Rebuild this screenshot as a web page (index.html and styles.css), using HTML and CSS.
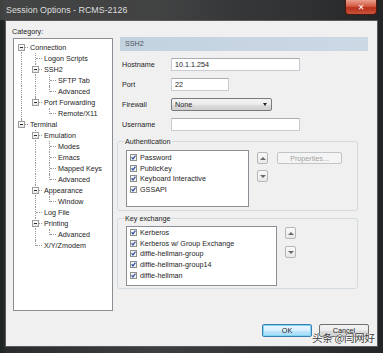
FILE: index.html
```html
<!DOCTYPE html>
<html>
<head>
<meta charset="utf-8">
<link rel="stylesheet" href="styles.css">
</head>
<body>
<div class="window">
  <div class="titlebar">
    <div class="title">Session Options - RCMS-2126</div>
    <div class="close">&#x2715;</div>
  </div>
  <div class="client">
    <div class="main">
      <div class="left">
        <div class="cat-label">Category:</div>
        <div class="tree">
          <div class="row"><span class="c f"><span class="exp"></span></span><span class="lbl">Connection</span></div>
          <div class="row"><span class="c v"></span><span class="c t"></span><span class="lbl">Logon Scripts</span></div>
          <div class="row"><span class="c v"></span><span class="c t"><span class="exp"></span></span><span class="lbl">SSH2</span></div>
          <div class="row"><span class="c v"></span><span class="c v"></span><span class="c t"></span><span class="lbl">SFTP Tab</span></div>
          <div class="row"><span class="c v"></span><span class="c v"></span><span class="c l"></span><span class="lbl">Advanced</span></div>
          <div class="row"><span class="c v"></span><span class="c l"><span class="exp"></span></span><span class="lbl">Port Forwarding</span></div>
          <div class="row"><span class="c v"></span><span class="c"></span><span class="c l"></span><span class="lbl">Remote/X11</span></div>
          <div class="row"><span class="c l"><span class="exp"></span></span><span class="lbl">Terminal</span></div>
          <div class="row"><span class="c"></span><span class="c t"><span class="exp"></span></span><span class="lbl">Emulation</span></div>
          <div class="row"><span class="c"></span><span class="c v"></span><span class="c t"></span><span class="lbl">Modes</span></div>
          <div class="row"><span class="c"></span><span class="c v"></span><span class="c t"></span><span class="lbl">Emacs</span></div>
          <div class="row"><span class="c"></span><span class="c v"></span><span class="c t"></span><span class="lbl">Mapped Keys</span></div>
          <div class="row"><span class="c"></span><span class="c v"></span><span class="c l"></span><span class="lbl">Advanced</span></div>
          <div class="row"><span class="c"></span><span class="c t"><span class="exp"></span></span><span class="lbl">Appearance</span></div>
          <div class="row"><span class="c"></span><span class="c v"></span><span class="c l"></span><span class="lbl">Window</span></div>
          <div class="row"><span class="c"></span><span class="c t"></span><span class="lbl">Log File</span></div>
          <div class="row"><span class="c"></span><span class="c t"><span class="exp"></span></span><span class="lbl">Printing</span></div>
          <div class="row"><span class="c"></span><span class="c v"></span><span class="c l"></span><span class="lbl">Advanced</span></div>
          <div class="row"><span class="c"></span><span class="c l"></span><span class="lbl">X/Y/Zmodem</span></div>
        </div>
      </div>
      <div class="right">
        <div class="header">SSH2</div>
        <div class="form">
          <label>Hostname</label><div class="input wide">10.1.1.254</div>
          <label>Port</label><div class="input port">22</div>
          <label>Firewall</label><div class="select"><span>None</span><span class="arrow"></span></div>
          <label>Username</label><div class="input wide"></div>
        </div>
        <fieldset class="group auth">
          <legend>Authentication</legend>
          <div class="group-body">
            <div class="list auth-list">
              <div class="item"><svg class="cb" width="7" height="7" viewBox="0 0 7 7"><rect x=".5" y=".5" width="6" height="6" fill="#f6f6f6" stroke="#8e8f8f"/><path d="M1.6 3.3 L3 4.9 L5.4 1.7" stroke="#3a55a0" stroke-width="1.3" fill="none"/></svg><span>Password</span></div>
              <div class="item"><svg class="cb" width="7" height="7" viewBox="0 0 7 7"><rect x=".5" y=".5" width="6" height="6" fill="#f6f6f6" stroke="#8e8f8f"/><path d="M1.6 3.3 L3 4.9 L5.4 1.7" stroke="#3a55a0" stroke-width="1.3" fill="none"/></svg><span>PublicKey</span></div>
              <div class="item"><svg class="cb" width="7" height="7" viewBox="0 0 7 7"><rect x=".5" y=".5" width="6" height="6" fill="#f6f6f6" stroke="#8e8f8f"/><path d="M1.6 3.3 L3 4.9 L5.4 1.7" stroke="#3a55a0" stroke-width="1.3" fill="none"/></svg><span>Keyboard Interactive</span></div>
              <div class="item"><svg class="cb" width="7" height="7" viewBox="0 0 7 7"><rect x=".5" y=".5" width="6" height="6" fill="#f6f6f6" stroke="#8e8f8f"/><path d="M1.6 3.3 L3 4.9 L5.4 1.7" stroke="#3a55a0" stroke-width="1.3" fill="none"/></svg><span>GSSAPI</span></div>
            </div>
            <div class="updown auth-ud">
              <div class="sbtn"><span class="tri up"></span></div>
              <div class="sbtn"><span class="tri down"></span></div>
            </div>
            <div class="btn props">Properties...</div>
          </div>
        </fieldset>
        <fieldset class="group kex">
          <legend>Key exchange</legend>
          <div class="group-body">
            <div class="list kex-list">
              <div class="item"><svg class="cb" width="7" height="7" viewBox="0 0 7 7"><rect x=".5" y=".5" width="6" height="6" fill="#f6f6f6" stroke="#8e8f8f"/><path d="M1.6 3.3 L3 4.9 L5.4 1.7" stroke="#3a55a0" stroke-width="1.3" fill="none"/></svg><span>Kerberos</span></div>
              <div class="item"><svg class="cb" width="7" height="7" viewBox="0 0 7 7"><rect x=".5" y=".5" width="6" height="6" fill="#f6f6f6" stroke="#8e8f8f"/><path d="M1.6 3.3 L3 4.9 L5.4 1.7" stroke="#3a55a0" stroke-width="1.3" fill="none"/></svg><span>Kerberos w/ Group Exchange</span></div>
              <div class="item"><svg class="cb" width="7" height="7" viewBox="0 0 7 7"><rect x=".5" y=".5" width="6" height="6" fill="#f6f6f6" stroke="#8e8f8f"/><path d="M1.6 3.3 L3 4.9 L5.4 1.7" stroke="#3a55a0" stroke-width="1.3" fill="none"/></svg><span>diffie-hellman-group</span></div>
              <div class="item"><svg class="cb" width="7" height="7" viewBox="0 0 7 7"><rect x=".5" y=".5" width="6" height="6" fill="#f6f6f6" stroke="#8e8f8f"/><path d="M1.6 3.3 L3 4.9 L5.4 1.7" stroke="#3a55a0" stroke-width="1.3" fill="none"/></svg><span>diffie-hellman-group14</span></div>
              <div class="item"><svg class="cb" width="7" height="7" viewBox="0 0 7 7"><rect x=".5" y=".5" width="6" height="6" fill="#f6f6f6" stroke="#8e8f8f"/><path d="M1.6 3.3 L3 4.9 L5.4 1.7" stroke="#3a55a0" stroke-width="1.3" fill="none"/></svg><span>diffie-hellman</span></div>
            </div>
            <div class="updown kex-ud">
              <div class="sbtn"><span class="tri up"></span></div>
              <div class="sbtn"><span class="tri down"></span></div>
            </div>
          </div>
        </fieldset>
      </div>
    </div>
    <div class="footer">
      <div class="btn dlg default">OK</div>
      <div class="btn dlg">Cancel</div>
    </div>
  </div>
  <div class="watermark">头条 @闫网好</div>
</div>
</body>
</html>
```

FILE: styles.css
```css
html, body {
  margin: 0;
  padding: 0;
}
body {
  width: 383px;
  height: 353px;
  overflow: hidden;
  background: #1a1c1d;
  font-family: "Liberation Sans", Arial, sans-serif;
  font-size: 7.2px;
  color: #1d1d1d;
}
.window {
  position: relative;
  width: 383px;
  height: 353px;
  display: flex;
  flex-direction: column;
  background: linear-gradient(90deg, #1c2420 0px, #2a2c2d 6px, #3d3e3f 40%, #303132 80%, #232425 100%);
}
.titlebar {
  height: 20px;
  display: flex;
  justify-content: space-between;
  align-items: flex-start;
  background: linear-gradient(90deg, rgba(90,90,90,0.55) 0%, rgba(80,80,80,0.35) 35%, rgba(0,0,0,0) 60%);
}
.title {
  margin: 5px 0 0 6px;
  font-size: 8.9px;
  line-height: 11px;
  color: #dedede;
  white-space: nowrap;
}
.close {
  width: 32px;
  height: 15px;
  margin-right: 6px;
  box-sizing: border-box;
  border: 1px solid #4a1a12;
  border-top: none;
  border-radius: 0 0 4px 4px;
  background: linear-gradient(180deg, #e9a08e 0%, #d25a42 45%, #b8301b 55%, #c8543a 100%);
  color: #fff;
  font-family: "DejaVu Sans", sans-serif;
  font-size: 8px;
  font-weight: bold;
  display: flex;
  align-items: center;
  justify-content: center;
}
.client {
  flex: 1;
  margin: 0 5px 6px 5px;
  background: #f0f0f0;
  border: 1px solid #5a5a5a;
  display: flex;
  flex-direction: column;
}
.main {
  display: flex;
  padding: 6px 0 0 6px;
}
.left {
  width: 101px;
  display: flex;
  flex-direction: column;
}
.cat-label {
  height: 10px;
  line-height: 10px;
}
.tree {
  margin: 1px 0 0 1px;
  width: 100px;
  height: 273px;
  box-sizing: border-box;
  background: #fff;
  border: 1px solid #8a8f96;
  padding-top: 2.5px;
}
.row {
  display: flex;
  height: 11px;
  align-items: center;
}
.c {
  position: relative;
  flex: none;
  width: 14px;
  height: 11px;
  display: flex;
  align-items: center;
  justify-content: center;
}
.c.v::before, .c.t::before, .c.l::before, .c.f::before {
  content: "";
  position: absolute;
  left: 7px;
  top: 0;
  bottom: 0;
  border-left: 1px dotted #9a9a9a;
}
.c.l::before {
  bottom: auto;
  height: 6px;
}
.c.f::before {
  top: 5px;
}
.c.t::after, .c.l::after, .c.f::after {
  content: "";
  position: absolute;
  left: 8px;
  top: 5px;
  width: 6px;
  border-top: 1px dotted #9a9a9a;
}
.exp {
  position: relative;
  z-index: 1;
  width: 7px;
  height: 7px;
  margin-left: 1px;
  box-sizing: border-box;
  border: 1px solid #9c9c9c;
  background: linear-gradient(180deg, #fff, #e6e6e6);
  display: flex;
  align-items: center;
  justify-content: center;
}
.exp::after {
  content: "";
  width: 3px;
  height: 1px;
  background: #2a2a2a;
}
.lbl {
  padding-left: 2px;
  line-height: 11px;
  white-space: nowrap;
}
.right {
  margin: 10px 0 0 4px;
  width: 251px;
  display: flex;
  flex-direction: column;
}
.header {
  margin-left: 3px;
  height: 14px;
  line-height: 14px;
  padding-left: 5px;
  background: linear-gradient(90deg, #c3d2df, #cbd9e5);
  color: #4a5560;
}
.form {
  display: grid;
  grid-template-columns: 49px auto;
  row-gap: 7px;
  margin: 7px 0 0 5px;
  align-items: center;
}
.form label {
  line-height: 13px;
}
.input {
  height: 13px;
  box-sizing: border-box;
  background: #fff;
  border: 1px solid #c8ccd2;
  border-top-color: #a9adb3;
  padding: 0 3px;
  line-height: 11px;
}
.input.wide {
  width: 129px;
}
.input.port {
  width: 58px;
}
.select {
  width: 101px;
  height: 13px;
  box-sizing: border-box;
  border: 1px solid #7a7a7a;
  border-radius: 2px;
  background: linear-gradient(180deg, #f4f4f4 0%, #ebebeb 50%, #dddddd 51%, #d0d0d0 100%);
  display: flex;
  align-items: center;
  justify-content: space-between;
  padding: 0 4px 0 3px;
  line-height: 11px;
}
.arrow {
  width: 0;
  height: 0;
  border-left: 2.5px solid transparent;
  border-right: 2.5px solid transparent;
  border-top: 3px solid #222;
}
.group {
  margin: 6px 10px 0 0;
  padding: 0 8px 3px 8px;
  border: 1px solid #d3dbe0;
  border-radius: 3px;
  min-width: 0;
}
.group legend {
  padding: 0 1px;
  margin-left: -2px;
  line-height: 9px;
}
.group.kex {
  margin-top: 3px;
  padding-bottom: 2px;
}
.group-body {
  display: flex;
  align-items: flex-start;
  margin-top: 4px;
}
.kex .group-body {
  margin-top: 3px;
}
.list {
  box-sizing: border-box;
  background: #fff;
  border: 1px solid #8a8f96;
}
.auth-list {
  width: 123px;
  height: 57px;
  padding-top: 1px;
}
.kex-list {
  width: 151px;
  height: 60px;
}
.item {
  height: 10.7px;
  display: flex;
  align-items: center;
  padding-left: 3px;
  white-space: nowrap;
}
.cb {
  flex: none;
  margin-right: 3px;
}
.updown {
  margin-left: 8px;
  display: flex;
  flex-direction: column;
  gap: 6px;
}
.auth-ud {
  margin-top: 2px;
}
.kex-ud {
  margin-top: 1px;
  gap: 7px;
}
.sbtn {
  width: 11px;
  height: 12px;
  box-sizing: border-box;
  border: 1px solid #b5b8bb;
  border-radius: 2px;
  background: linear-gradient(180deg, #fafafa, #e8e8e8);
  display: flex;
  align-items: center;
  justify-content: center;
}
.tri {
  width: 0;
  height: 0;
  border-left: 3px solid transparent;
  border-right: 3px solid transparent;
}
.tri.up {
  border-bottom: 3px solid #6a6a6a;
}
.tri.down {
  border-top: 3px solid #6a6a6a;
}
.btn {
  box-sizing: border-box;
  display: flex;
  align-items: center;
  justify-content: center;
  border-radius: 2px;
}
.props {
  margin: 2px 0 0 9px;
  width: 65px;
  height: 12px;
  border: 1px solid #c2c5c8;
  background: #f4f4f4;
  color: #a2a2a2;
}
.footer {
  display: flex;
  justify-content: flex-end;
  gap: 7px;
  margin: auto 8px 9px 0;
}
.dlg {
  width: 50px;
  height: 13px;
  border: 1px solid #707070;
  background: linear-gradient(180deg, #f3f3f3 0%, #ebebeb 50%, #dddddd 51%, #cfcfcf 100%);
}
.dlg.default {
  border-color: #3c7fb1;
  background: linear-gradient(180deg, #eaf6fd 0%, #d9f0fc 50%, #bee6fd 51%, #a7d9f5 100%);
  box-shadow: inset 0 0 0 1px #7fd4f0;
}
.watermark {
  position: absolute;
  left: 312px;
  top: 331px;
  font-family: "Noto Sans CJK SC", sans-serif;
  font-size: 10.5px;
  line-height: 14px;
  color: #3a3a3a;
  text-shadow: 0 0 2px #fff, 0 0 1px #fff;
  white-space: nowrap;
  letter-spacing: -0.3px;
}
```
